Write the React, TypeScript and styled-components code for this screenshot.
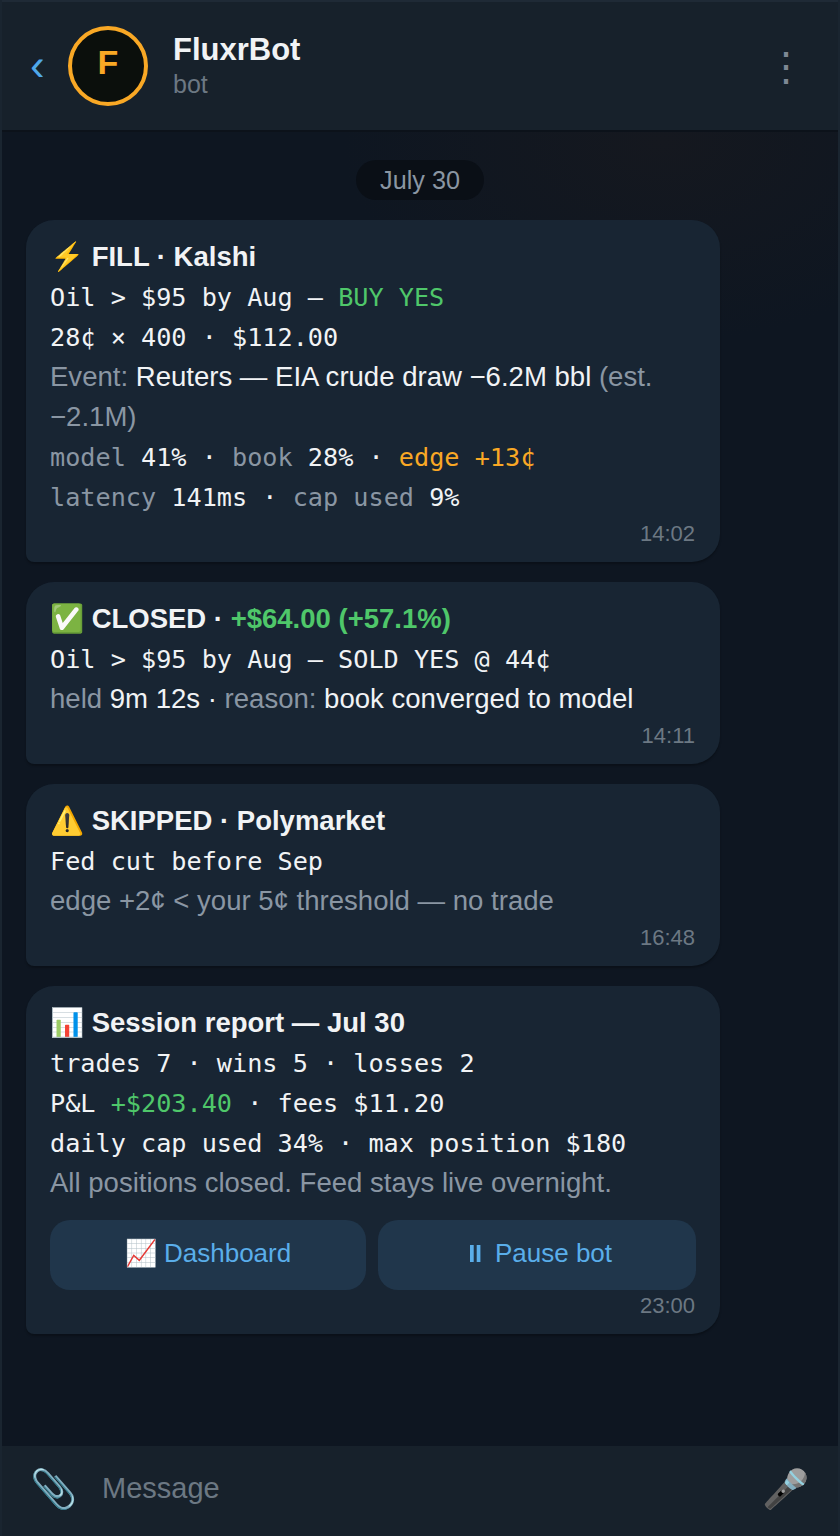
import React from 'react';
import styled, { createGlobalStyle } from 'styled-components';

const Global = createGlobalStyle`
  html, body { margin: 0; padding: 0; background: #0e1621; }
  * { box-sizing: border-box; }
`;

const Phone = styled.div`
  width: 840px;
  height: 1536px;
  display: flex;
  flex-direction: column;
  background: #0e1621;
  border: solid #1a2530;
  border-width: 0 2px;
  font-family: "Liberation Sans", Arial, sans-serif;
  color: #f1f3f5;
  overflow: hidden;
`;

const Header = styled.header`
  height: 132px;
  flex: none;
  display: flex;
  align-items: center;
  background: #17212b;
  border-top: 2px solid #1f2a36;
  border-bottom: 2px solid #0c121a;
  padding: 0 32px 0 28px;
`;

const Back = styled.span`
  font-size: 44px;
  line-height: 1;
  color: #4fa8ea;
  width: 38px;
  padding-bottom: 2px;
`;

const Avatar = styled.div`
  width: 80px;
  height: 80px;
  border-radius: 50%;
  border: 4px solid #f9a825;
  background: #0b0f0c;
  color: #f9a825;
  display: flex;
  align-items: center;
  justify-content: center;
  font-weight: 700;
  font-size: 34px;
  padding-bottom: 8px;
  flex: none;
`;

const Who = styled.div`
  margin-left: 25px;
  flex: 1;
  display: flex;
  flex-direction: column;
`;

const Name = styled.div`
  font-size: 31px;
  font-weight: 700;
  line-height: 36px;
`;

const Sub = styled.div`
  font-size: 25px;
  line-height: 32px;
  color: #6c7883;
`;

const Menu = styled.span`
  font-size: 40px;
  color: #7d8894;
  line-height: 1;
`;

const Chat = styled.main`
  flex: 1;
  display: flex;
  flex-direction: column;
  align-items: flex-start;
  padding: 28px 24px 0;
  gap: 20px;
  min-height: 0;
  background: radial-gradient(320px 200px at 660px 10px, #15181f, transparent);
`;

const DateChip = styled.div`
  align-self: center;
  height: 40px;
  padding: 0 24px;
  border-radius: 20px;
  background: #0a0f16;
  color: #8a96a3;
  font-size: 25.2px;
  line-height: 40px;
`;

const Bubble = styled.article`
  width: 694px;
  background: #182533;
  border-radius: 28px 28px 28px 8px;
  padding: 18px 24px 0;
  box-shadow: 0 2px 2px rgba(0, 0, 0, 0.25);
  font-size: 27.55px;
  line-height: 40px;
`;

const Title = styled.div`
  font-size: 27.5px;
  font-weight: 700;
  color: #f1f3f5;
  margin: -1px 0 1px;
`;

const Mono = styled.div`
  font-family: "DejaVu Sans Mono", monospace;
  font-size: 25.2px;
  line-height: 40px;
  white-space: pre;
  color: #f1f3f5;
`;

const Line = styled.div`
  color: #f1f3f5;
  margin: -1px 0 1px;
`;

const Dim = styled.span`
  color: #8a96a3;
`;

const Green = styled.span`
  color: #4fc76a;
`;

const Amber = styled.span`
  color: #f9a825;
`;

const Time = styled.div`
  text-align: right;
  font-size: 22px;
  line-height: 30px;
  color: #6c7883;
  padding: 1px 1px 13px 0;
`;

const Buttons = styled.div`
  display: grid;
  grid-template-columns: 316px 318px;
  gap: 12px;
  margin-top: 17px;
`;

const Btn = styled.button`
  height: 70px;
  border: 0;
  border-radius: 20px;
  background: #20364b;
  color: #5aaeea;
  font: 26px "Liberation Sans", Arial, sans-serif;
  display: flex;
  align-items: center;
  justify-content: center;
  gap: 7px;
  padding: 0 0 4px;
`;

const PauseIcon = styled.svg`
  width: 26px;
  height: 26px;
  flex: none;
  fill: #5aaeea;
`;

const InputBar = styled.footer`
  height: 90px;
  flex: none;
  display: flex;
  align-items: center;
  background: #17212b;
  padding: 0 29px 0 28px;
`;

const Glyph = styled.span`
  font-size: 38px;
  line-height: 1;
  padding-bottom: 4px;
`;

const Placeholder = styled.div`
  flex: 1;
  margin-left: 25px;
  font-size: 29px;
  color: #6c7883;
  padding-bottom: 6px;
`;

export default function App() {
  return (
    <>
      <Global />
      <Phone>
        <Header>
          <Back>‹</Back>
          <Avatar>F</Avatar>
          <Who>
            <Name>FluxrBot</Name>
            <Sub>bot</Sub>
          </Who>
          <Menu>⋮</Menu>
        </Header>
        <Chat>
          <DateChip>July 30</DateChip>
          <Bubble>
            <Title>⚡ FILL · Kalshi</Title>
            <Mono>Oil &gt; $95 by Aug — <Green>BUY YES</Green></Mono>
            <Mono>28¢ × 400 · $112.00</Mono>
            <Line><Dim>Event:</Dim> Reuters — EIA crude draw −6.2M bbl <Dim>(est. −2.1M)</Dim></Line>
            <Mono><Dim>model</Dim> 41% · <Dim>book</Dim> 28% · <Amber>edge +13¢</Amber></Mono>
            <Mono><Dim>latency</Dim> 141ms · <Dim>cap used</Dim> 9%</Mono>
            <Time>14:02</Time>
          </Bubble>
          <Bubble>
            <Title>✅ CLOSED · <Green>+$64.00 (+57.1%)</Green></Title>
            <Mono>Oil &gt; $95 by Aug — SOLD YES @ 44¢</Mono>
            <Line><Dim>held</Dim> 9m 12s · <Dim>reason:</Dim> book converged to model</Line>
            <Time>14:11</Time>
          </Bubble>
          <Bubble>
            <Title>⚠️ SKIPPED · Polymarket</Title>
            <Mono>Fed cut before Sep</Mono>
            <Line><Dim>edge +2¢ &lt; your 5¢ threshold — no trade</Dim></Line>
            <Time>16:48</Time>
          </Bubble>
          <Bubble>
            <Title>📊 Session report — Jul 30</Title>
            <Mono>trades 7 · wins 5 · losses 2</Mono>
            <Mono>P&amp;L <Green>+$203.40</Green> · fees $11.20</Mono>
            <Mono>daily cap used 34% · max position $180</Mono>
            <Line><Dim>All positions closed. Feed stays live overnight.</Dim></Line>
            <Buttons>
              <Btn>📈 Dashboard</Btn>
              <Btn>
                <PauseIcon viewBox="0 0 26 26">
                  <rect x="8" y="5" width="3.7" height="17" />
                  <rect x="14.7" y="5" width="3.7" height="17" />
                </PauseIcon>
                Pause bot
              </Btn>
            </Buttons>
            <Time>23:00</Time>
          </Bubble>
        </Chat>
        <InputBar>
          <Glyph>📎</Glyph>
          <Placeholder>Message</Placeholder>
          <Glyph>🎤</Glyph>
        </InputBar>
      </Phone>
    </>
  );
}
